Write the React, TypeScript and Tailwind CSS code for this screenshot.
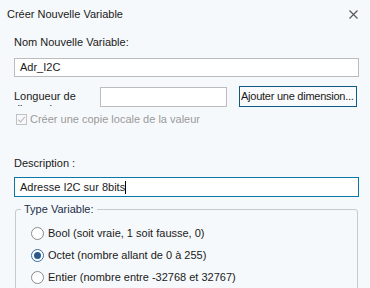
import React from 'react';

const font = { fontFamily: '"Liberation Sans", Arial, sans-serif' };

function Radio({ checked, label }: { checked?: boolean; label: string }) {
  return (
    <div className="flex items-center h-[22px]">
      <span
        className={`w-[13px] h-[13px] rounded-full border flex items-center justify-center bg-white ${
          checked ? 'border-[#3a6ea5]' : 'border-[#8a8a8a]'
        }`}
      >
        {checked && <span className="w-[7px] h-[7px] rounded-full bg-[#2a5a8c]" />}
      </span>
      <span className="ml-[4px] text-[#1a1a1a]">{label}</span>
    </div>
  );
}

export default function App() {
  return (
    <div
      className="w-[370px] h-[288px] overflow-hidden bg-[#f6f9fb] text-[11px] leading-[13px] text-[#1a1a1a]"
      style={font}
    >
      {/* Title bar */}
      <div className="flex justify-between items-center h-[28px] pl-[7px] pr-[12px]">
        <span className="text-[#1a1a1a]">Créer Nouvelle Variable</span>
        <svg width="9" height="9" viewBox="0 0 9 9">
          <path d="M0.5 0.5 L8.5 8.5 M8.5 0.5 L0.5 8.5" stroke="#555" strokeWidth="1.1" />
        </svg>
      </div>

      <div className="pl-[14px] pr-[11px]">
        <div className="mt-[8px] h-[13px]">Nom Nouvelle Variable:</div>
        <div className="mt-[9px] h-[19px] border border-[#bcbcbc] bg-white flex items-center pl-[5px]">
          Adr_I2C
        </div>

        {/* Longueur row */}
        <div className="mt-[9px] flex items-start">
          <div className="w-[86px] mt-[4px] h-[16px] overflow-hidden">Longueur de dimension</div>
          <div className="mt-[1px] w-[127px] h-[20px] border border-[#bcbcbc] bg-white" />
          <button className="ml-[12px] w-[118px] h-[21px] border border-[#0f5a85] bg-[#f8fafc] text-[11px] tracking-[-0.25px] text-[#1a1a1a] pl-[1px] text-left whitespace-nowrap">
            Ajouter une dimension...
          </button>
        </div>

        <div className="mt-[6px] flex items-center ml-[2px] h-[13px]">
          <span className="w-[11px] h-[11px] border border-[#c2c2c2] flex items-center justify-center">
            <svg width="9" height="9" viewBox="0 0 9 9">
              <path d="M1.2 4.6 L3.6 7 L7.8 1.8" stroke="#b8b8b8" strokeWidth="1.1" fill="none" />
            </svg>
          </span>
          <span className="ml-[3px] text-[#9a9a9a]">Créer une copie locale de la valeur</span>
        </div>

        <div className="mt-[31px] h-[13px]">Description :</div>
        <div className="mt-[7px] h-[20px] border border-[#0a79a8] bg-white flex items-center pl-[5px]">
          Adresse I2C sur 8bits
          <span className="w-px h-[13px] bg-black" />
        </div>

        <fieldset className="mt-[6px] ml-[1px] mr-[1px] border border-[#c6cacd] rounded-[3px] pl-[5px] pt-[6px] h-[120px]">
          <legend className="px-[3px] text-[#1c2e48]">Type Variable:</legend>
          <div className="pl-[10px]">
            <Radio label="Bool (soit vraie, 1 soit fausse, 0)" />
            <Radio checked label="Octet (nombre allant de 0 à 255)" />
            <Radio label="Entier (nombre entre -32768 et 32767)" />
          </div>
        </fieldset>
      </div>
    </div>
  );
}
